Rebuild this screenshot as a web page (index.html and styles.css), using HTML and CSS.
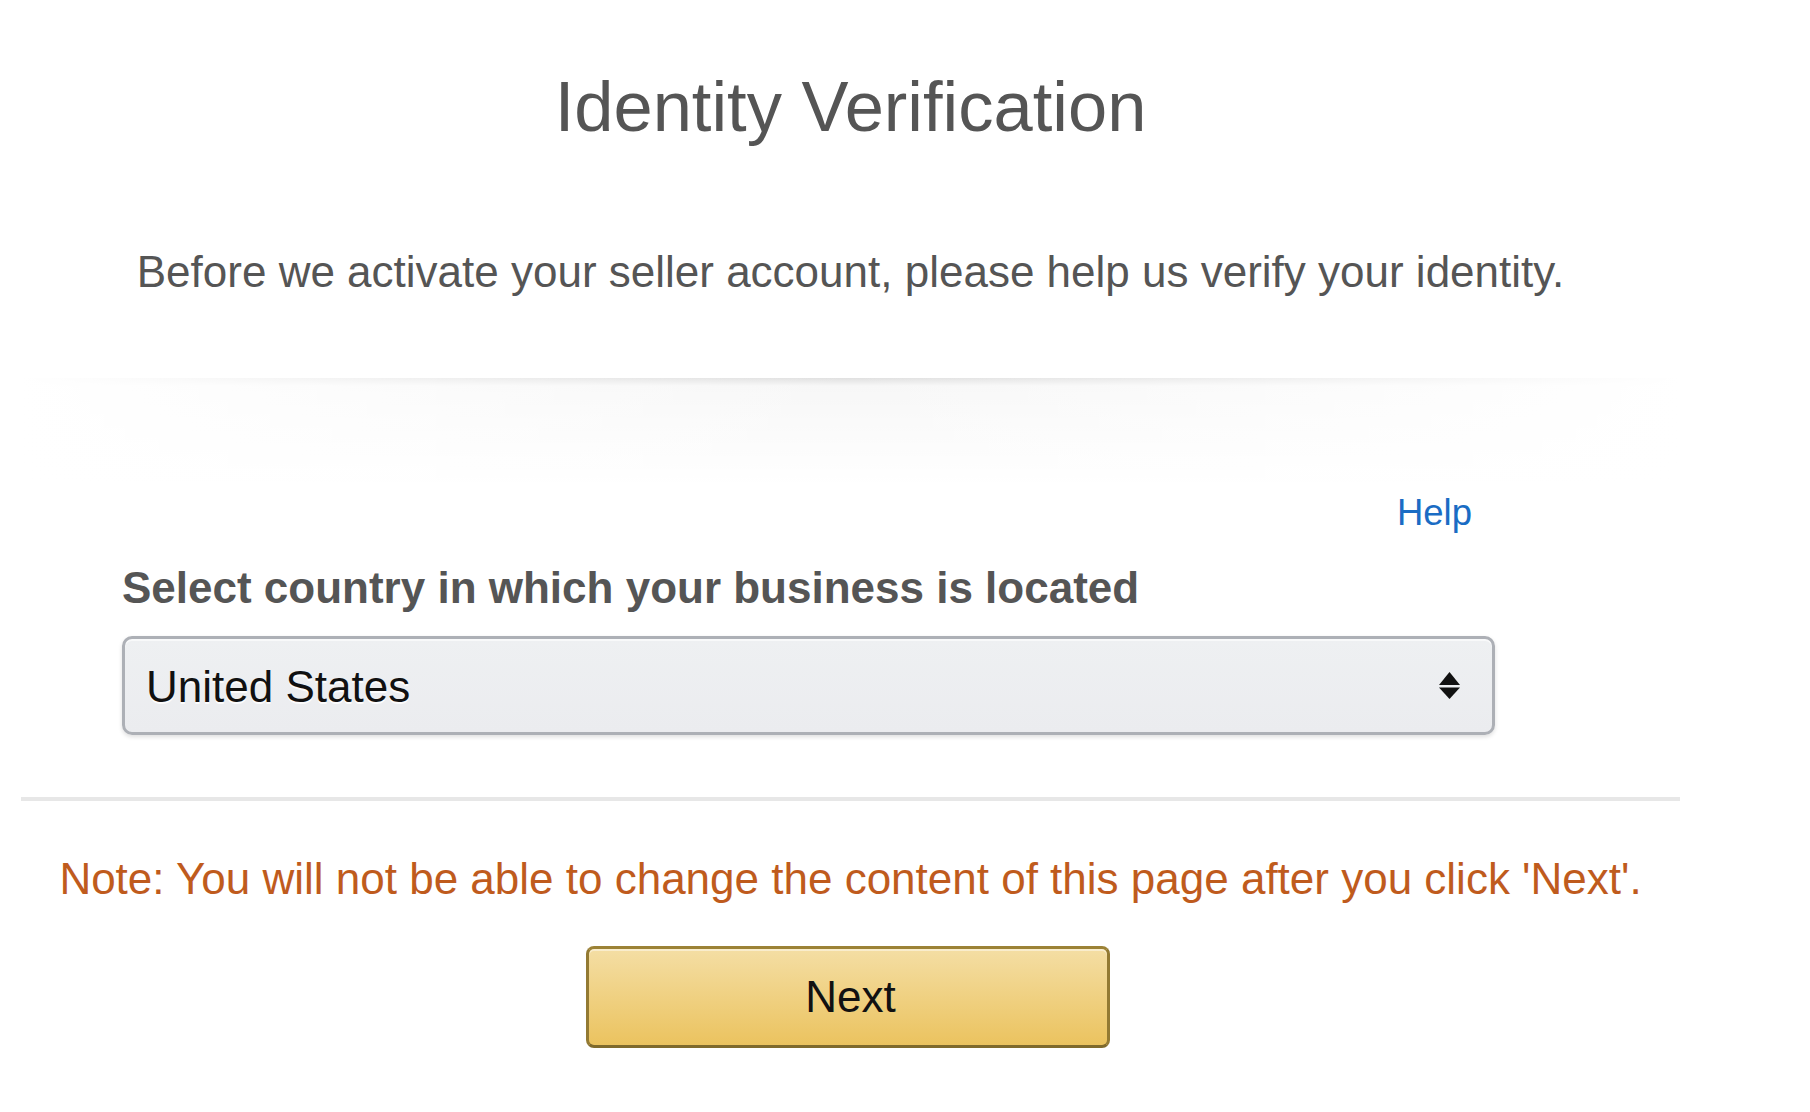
FILE: index.html
```html
<!DOCTYPE html>
<html lang="en">
<head>
<meta charset="utf-8">
<title>Identity Verification</title>
<link rel="stylesheet" href="styles.css">
</head>
<body>
<div class="page">
  <main class="main">
    <h1 class="title">Identity Verification</h1>
    <p class="intro">Before we activate your seller account, please help us verify your identity.</p>
    <div class="section-divider"></div>
    <div class="help-row"><a class="help-link" href="#">Help</a></div>
    <label class="field-label">Select country in which your business is located</label>
    <div class="dropdown" role="button">
      <span class="dropdown-text">United States</span>
      <svg class="dropdown-icon" width="21" height="27" viewBox="0 0 21 27" aria-hidden="true">
        <polygon points="0,13 10.5,0 21,13" fill="#111"/>
        <polygon points="0,15.5 21,15.5 10.5,27" fill="#111"/>
      </svg>
    </div>
    <div class="rule"></div>
    <p class="note">Note: You will not be able to change the content of this page after you click 'Next'.</p>
    <div class="btn-row">
      <button class="btn-primary" type="button">Next</button>
    </div>
  </main>
</div>
</body>
</html>
```
FILE: styles.css
```css
html, body {
  margin: 0;
  padding: 0;
  background: #fff;
}

body {
  font-family: "Liberation Sans", Arial, sans-serif;
  color: #555;
}

.page {
  padding-left: 21px;
}

.main {
  width: 1659px;
  display: flex;
  flex-direction: column;
}

.title {
  margin: 67px 0 0;
  font-size: 70.5px;
  line-height: 80px;
  font-weight: normal;
  text-align: center;
  color: #555;
}

.intro {
  margin: 99px 0 0;
  font-size: 44px;
  line-height: 52px;
  text-align: center;
  color: #555;
}

.section-divider {
  position: relative;
  margin-top: 80px;
  height: 110px;
  background: linear-gradient(to bottom, rgba(0,0,0,0.12), rgba(0,0,0,0.03) 8px, rgba(0,0,0,0));
}

.section-divider::after {
  content: "";
  position: absolute;
  inset: 0;
  background: linear-gradient(to right, #fff, rgba(255,255,255,0), #fff);
}

.help-row {
  margin-top: 3px;
  padding-right: 208px;
  text-align: right;
  font-size: 36.5px;
  line-height: 44px;
}

.help-link {
  color: #1a6cc4;
  text-decoration: none;
}

.field-label {
  display: block;
  margin-top: 27px;
  padding-left: 101px;
  font-size: 44px;
  line-height: 52px;
  font-weight: bold;
  color: #555;
}

.dropdown {
  box-sizing: border-box;
  margin: 22px 185px 0 101px;
  height: 99px;
  border: 3px solid #adb0b6;
  border-radius: 10px;
  background: linear-gradient(to bottom, #eef0f2, #ebecef);
  box-shadow: 0 2px 4px rgba(0,0,0,0.13), inset 0 2px 0 rgba(255,255,255,0.6);
  display: flex;
  align-items: center;
  justify-content: space-between;
  padding: 3px 32px 0 21px;
}

.dropdown-text {
  font-size: 44px;
  line-height: 52px;
  color: #111;
  text-shadow: 0 2px 0 rgba(255,255,255,0.9);
}

.dropdown-icon {
  display: block;
  margin-top: -3px;
}

.rule {
  margin-top: 62px;
  height: 3.5px;
  background: #e7e7e7;
}

.note {
  margin: 52px 0 0;
  font-size: 44px;
  line-height: 52px;
  text-align: center;
  color: #bf5b1d;
}

.btn-row {
  margin-top: 41px;
  display: flex;
  justify-content: center;
}

.btn-primary {
  box-sizing: border-box;
  width: 524px;
  height: 102px;
  margin-left: -6px;
  border: 3px solid;
  border-color: #9c8236 #937a33 #7f6a2c;
  border-radius: 8px;
  background: linear-gradient(to bottom, #f4dea4, #ebc35f);
  box-shadow: inset 0 2px 0 rgba(255,255,255,0.45);
  font-family: "Liberation Sans", Arial, sans-serif;
  font-size: 44px;
  line-height: 52px;
  color: #111;
  padding: 0 0 0 6px;
  cursor: pointer;
}
```
